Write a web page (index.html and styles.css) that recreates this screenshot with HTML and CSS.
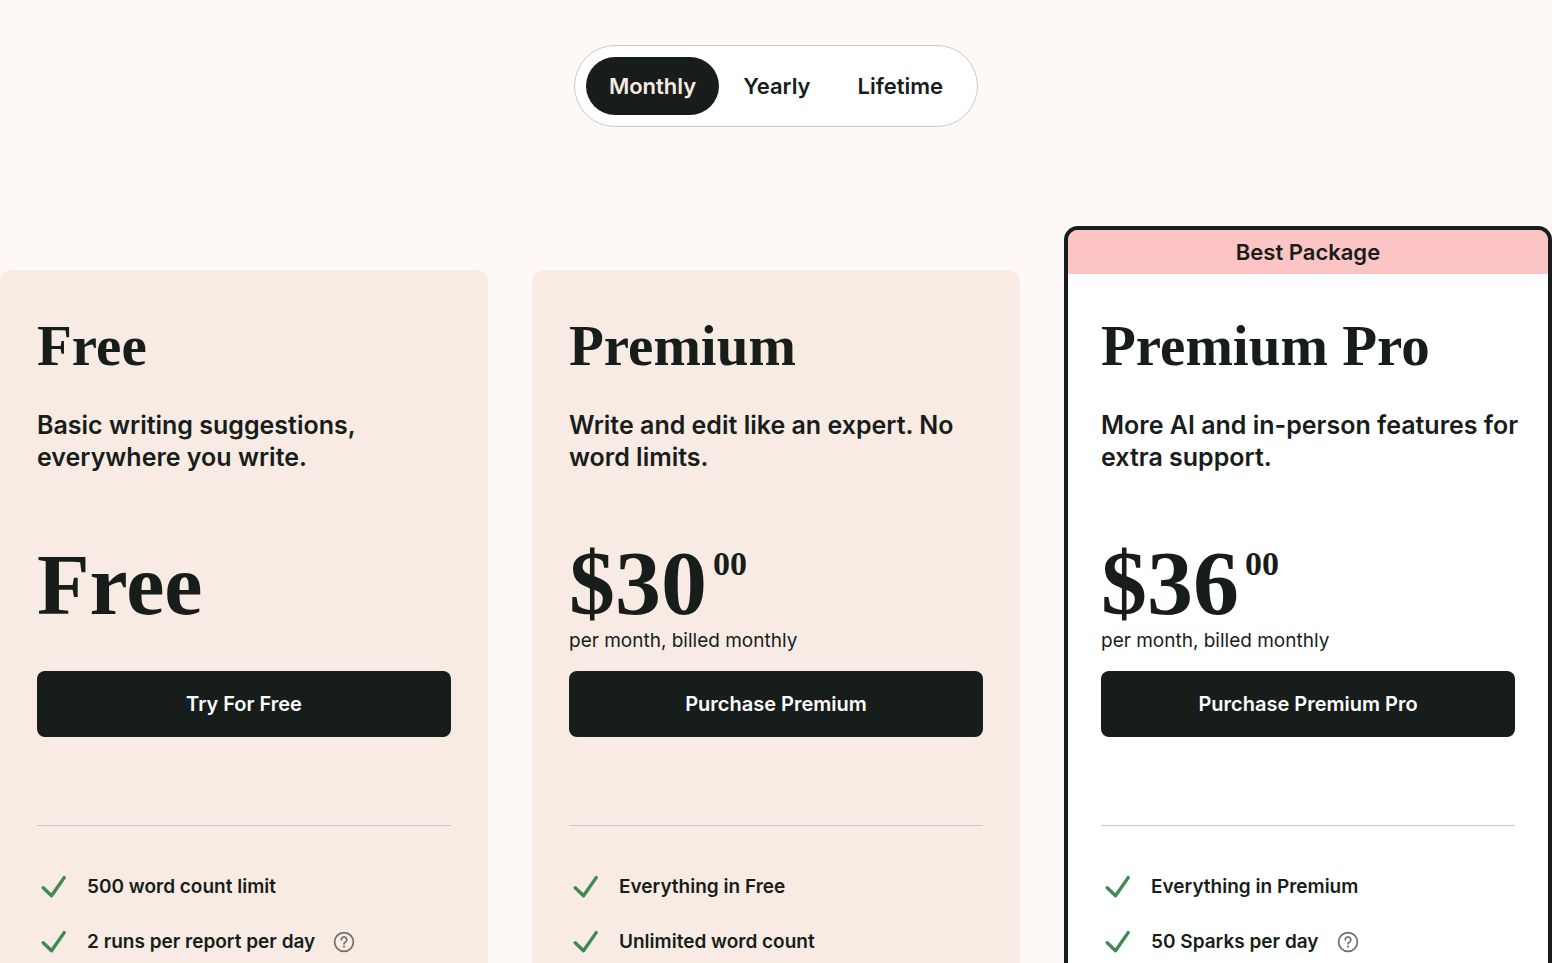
FILE: index.html
```html
<!DOCTYPE html>
<html lang="en">
<head>
    <meta charset="UTF-8">
    <meta name="viewport" content="width=device-width, initial-scale=1.0">
    <title>Pricing</title>
    <link rel="stylesheet" href="styles.css">
</head>
<body>
    <!-- shared icons -->
    <svg class="sprite" aria-hidden="true">
        <symbol id="icon-check" viewBox="0 0 32 32">
            <path d="M6.2 16.8 14.5 24.8 27.2 6.6" fill="none" stroke="#3f8a52" stroke-width="3.4" stroke-linecap="round" stroke-linejoin="round"/>
        </symbol>
        <symbol id="icon-help" viewBox="0 0 22 22">
            <g fill="none" stroke="#707068" stroke-width="1.7" stroke-linecap="round" stroke-linejoin="round">
                <circle cx="11" cy="11" r="9.4"/>
                <path d="M8.2 8.8a2.8 2.8 0 1 1 4.3 2.3c-.9.5-1.5.8-1.5 1.7"/>
            </g>
            <circle cx="11" cy="15.5" r="1.1" fill="#707068"/>
        </symbol>
    </svg>

    <main class="pricing">
        <div class="billing">
            <button type="button" class="billing-option active">Monthly</button>
            <button type="button" class="billing-option">Yearly</button>
            <button type="button" class="billing-option">Lifetime</button>
        </div>

        <div class="plans">
            <section class="plan">
                <h2>Free</h2>
                <p class="description">Basic writing suggestions, everywhere you write.</p>
                <div class="price">
                    <div class="amount free">Free</div>
                </div>
                <button type="button" class="buy">Try For Free</button>
                <ul class="features">
                    <li><svg class="check"><use href="#icon-check"/></svg>500 word count limit</li>
                    <li><svg class="check"><use href="#icon-check"/></svg>2 runs per report per day
                        <button type="button" class="help" aria-label="More about reports"><svg><use href="#icon-help"/></svg></button></li>
                </ul>
            </section>

            <section class="plan">
                <h2>Premium</h2>
                <p class="description">Write and edit like an expert. No word limits.</p>
                <div class="price">
                    <div class="amount">$30<sup>00</sup></div>
                    <div class="period">per month, billed monthly</div>
                </div>
                <button type="button" class="buy">Purchase Premium</button>
                <ul class="features">
                    <li><svg class="check"><use href="#icon-check"/></svg>Everything in Free</li>
                    <li><svg class="check"><use href="#icon-check"/></svg>Unlimited word count</li>
                </ul>
            </section>

            <section class="plan best">
                <div class="banner">Best Package</div>
                <h2>Premium Pro</h2>
                <p class="description">More AI and in-person features for extra support.</p>
                <div class="price">
                    <div class="amount">$36<sup>00</sup></div>
                    <div class="period">per month, billed monthly</div>
                </div>
                <button type="button" class="buy">Purchase Premium Pro</button>
                <ul class="features">
                    <li><svg class="check"><use href="#icon-check"/></svg>Everything in Premium</li>
                    <li><svg class="check"><use href="#icon-check"/></svg>50 Sparks per day
                        <button type="button" class="help" aria-label="More about Sparks"><svg><use href="#icon-help"/></svg></button></li>
                </ul>
            </section>
        </div>
    </main>

    <script>
        const options = document.querySelectorAll('.billing-option');

        options.forEach(option => {
            option.addEventListener('click', () => {
                options.forEach(other => other.classList.remove('active'));
                option.classList.add('active');
            });
        });
    </script>
</body>
</html>
```
FILE: styles.css
```css
* {
    box-sizing: border-box;
}
body {
    margin: 0;
    font-family: Inter, "Liberation Sans", sans-serif;
    color: #171d1a;
    background-color: #fef9f7;
}
button {
    font-family: inherit;
    border: none;
    cursor: pointer;
}
.sprite {
    display: none;
}
.pricing {
    padding-top: 45px;
}
.billing {
    display: flex;
    gap: 1px;
    width: fit-content;
    margin: 0 auto;
    padding: 11px;
    border: 1px solid #c9c9c9;
    border-radius: 41px;
    background-color: #fff;
}
.billing-option {
    height: 58px;
    padding: 0 23px;
    border-radius: 29px;
    font-size: 22px;
    font-weight: 600;
    color: #171d1a;
    background-color: transparent;
}
.billing-option.active {
    color: #f8ebe3;
    background-color: #171d1a;
}
.plans {
    display: grid;
    grid-template-columns: repeat(3, 1fr);
    gap: 44px;
    margin-top: 99px;
}
.plan {
    margin-top: 44px;
    padding: 44px 37px;
    border-radius: 12px;
    background-color: #f8ebe3;
}
.plan.best {
    margin-top: 0;
    padding: 0 33px 40px;
    border: 4px solid #171d1a;
    border-radius: 14px;
    background-color: #fff;
}
.banner {
    margin: 0 -33px 40px;
    border-radius: 10px 10px 0 0;
    font-size: 22px;
    font-weight: 600;
    line-height: 44px;
    text-align: center;
    background-color: #fdc4c5;
}
.plan h2 {
    margin: 0;
    font-family: "Liberation Serif", serif;
    font-size: 57px;
    font-weight: 700;
    line-height: 64px;
}
.description {
    margin: 31px -4px 0 0;
    font-size: 25px;
    font-weight: 570;
    line-height: 32px;
}
.price {
    height: 128px;
    margin-top: 70px;
}
.amount {
    display: flex;
    gap: 6px;
    margin-bottom: 4px;
    font-family: "Liberation Serif", serif;
    font-size: 92px;
    font-weight: 700;
    line-height: 80px;
}
.amount.free {
    font-size: 86px;
    line-height: 84px;
}
.amount sup {
    font-size: 34px;
    line-height: 42px;
}
.period {
    font-size: 19px;
    line-height: 28px;
}
.buy {
    width: 100%;
    height: 66px;
    border-radius: 8px;
    font-size: 20px;
    font-weight: 600;
    color: #fff;
    background-color: #171d1a;
}
.features {
    display: flex;
    flex-direction: column;
    gap: 23px;
    margin: 88px 0 0;
    padding: 45px 0 0;
    border-top: 1px solid #c9c9c9;
    list-style: none;
}
.features li {
    display: flex;
    align-items: center;
    font-size: 19px;
    font-weight: 600;
    line-height: 32px;
}
.check {
    width: 32px;
    height: 32px;
    margin-right: 18px;
}
.help {
    display: flex;
    margin-left: 18px;
    padding: 0;
    background-color: transparent;
}
.help svg {
    width: 22px;
    height: 22px;
}
```
